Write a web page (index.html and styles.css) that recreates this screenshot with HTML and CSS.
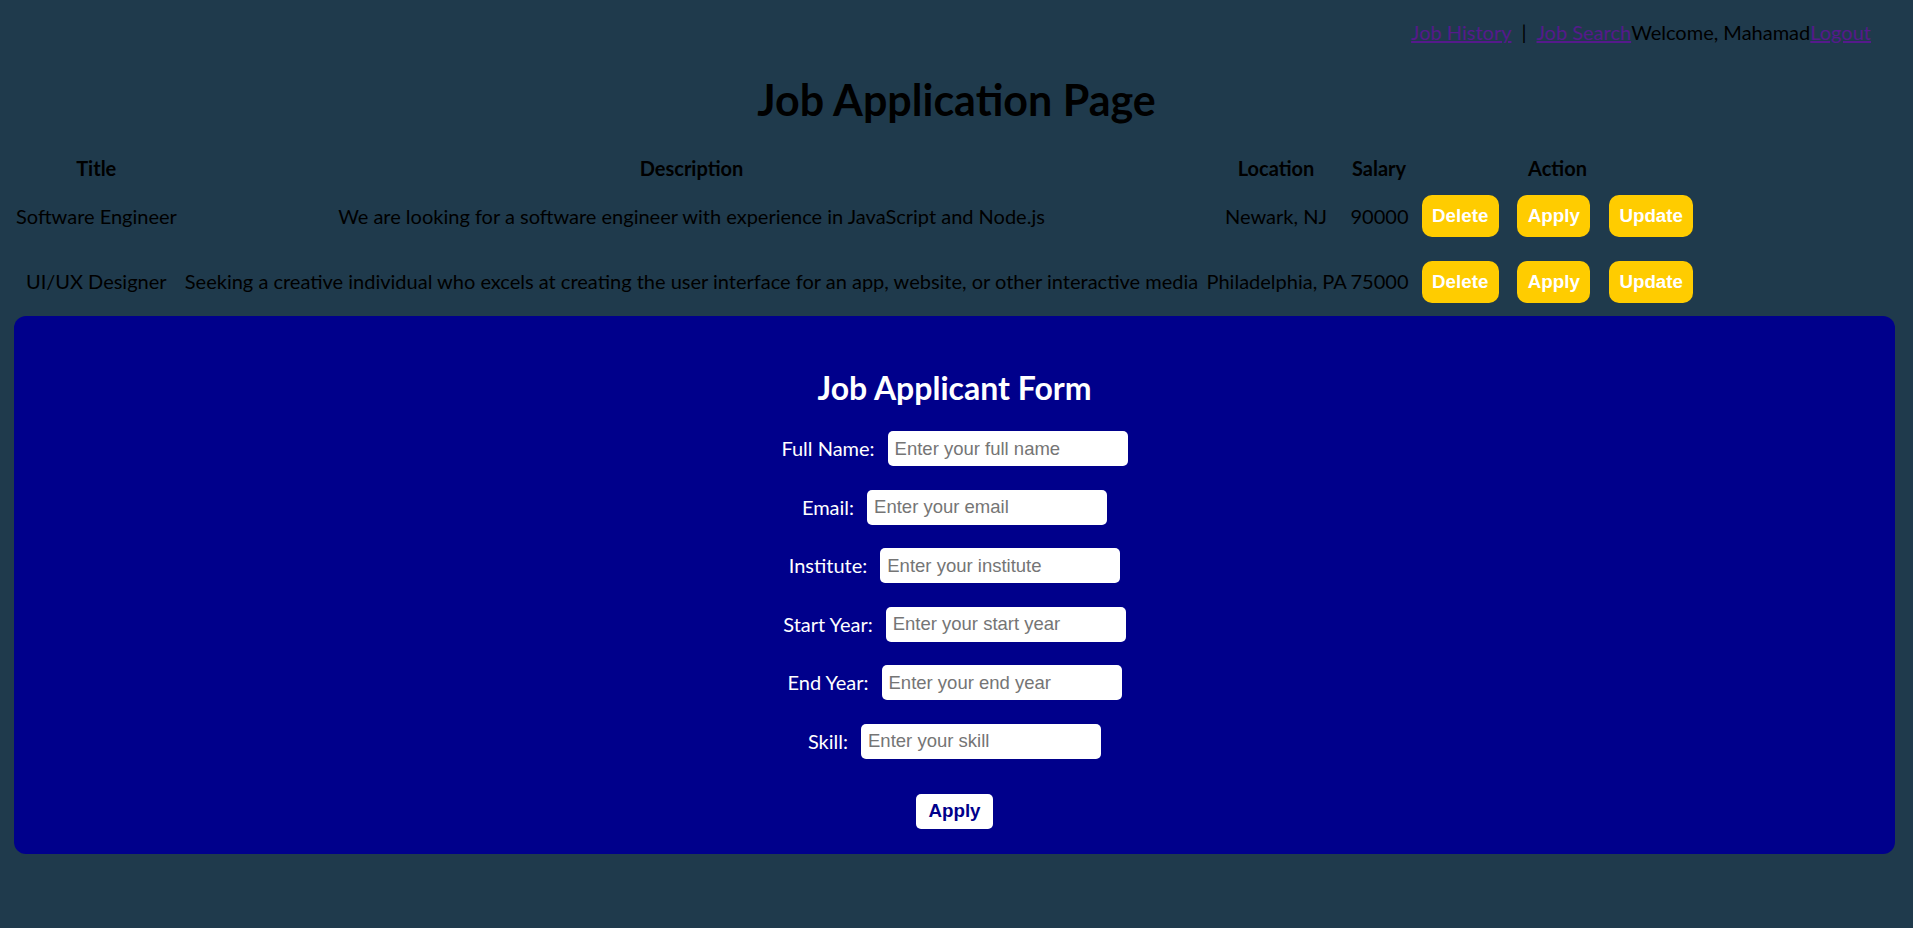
FILE: index.html
```html
<!DOCTYPE html>
<html lang="en">
<head>
<meta charset="utf-8">
<title>Job Application Page</title>
<link rel="stylesheet" href="styles.css">
</head>
<body>
<header class="topbar">
  <nav class="nav">
    <a href="#" class="nav-link">Job History</a><span class="sep">|</span><a href="#" class="nav-link">Job Search</a><span class="welcome">Welcome, Mahamad</span><a href="#" class="nav-link">Logout</a>
  </nav>
</header>

<h1 class="page-title">Job Application Page</h1>

<table class="jobs">
  <colgroup>
    <col class="c-title">
    <col class="c-desc">
    <col class="c-loc">
    <col class="c-sal">
    <col class="c-act">
  </colgroup>
  <thead>
    <tr><th>Title</th><th>Description</th><th>Location</th><th>Salary</th><th>Action</th></tr>
  </thead>
  <tbody>
    <tr>
      <td>Software Engineer</td>
      <td>We are looking for a software engineer with experience in JavaScript and Node.js</td>
      <td>Newark, NJ</td>
      <td>90000</td>
      <td><div class="btn-group"><button class="btn-action">Delete</button><button class="btn-action">Apply</button><button class="btn-action">Update</button></div></td>
    </tr>
    <tr>
      <td>UI/UX Designer</td>
      <td>Seeking a creative individual who excels at creating the user interface for an app, website, or other interactive media</td>
      <td>Philadelphia, PA</td>
      <td>75000</td>
      <td><div class="btn-group"><button class="btn-action">Delete</button><button class="btn-action">Apply</button><button class="btn-action">Update</button></div></td>
    </tr>
  </tbody>
</table>

<section class="form-card">
  <h2 class="form-title">Job Applicant Form</h2>
  <form class="applicant-form">
    <div class="field"><label class="field-label">Full Name:</label><input class="field-input" type="text" placeholder="Enter your full name"></div>
    <div class="field"><label class="field-label">Email:</label><input class="field-input" type="text" placeholder="Enter your email"></div>
    <div class="field"><label class="field-label">Institute:</label><input class="field-input" type="text" placeholder="Enter your institute"></div>
    <div class="field"><label class="field-label">Start Year:</label><input class="field-input" type="text" placeholder="Enter your start year"></div>
    <div class="field"><label class="field-label">End Year:</label><input class="field-input" type="text" placeholder="Enter your end year"></div>
    <div class="field"><label class="field-label">Skill:</label><input class="field-input" type="text" placeholder="Enter your skill"></div>
    <div class="submit-row"><button type="button" class="btn-submit">Apply</button></div>
  </form>
</section>
</body>
</html>
```

FILE: styles.css
```css
html {
  background: #1f3a4c;
}

body {
  margin: 10px;
  background: #1f3a4c;
  color: #000;
  font-family: Lato, "Open Sans", sans-serif;
  font-size: 20px;
  line-height: 27px;
}

.topbar {
  padding: 9px 32px 0 0;
}

.nav {
  display: flex;
  justify-content: flex-end;
}

.nav-link {
  color: #551a8b;
  text-decoration: underline;
}

.sep {
  padding: 0 10px;
}

.page-title {
  margin: 27px 0 27px;
  font-size: 43px;
  line-height: 53px;
  font-weight: 700;
  text-align: center;
}

.jobs {
  margin-left: 3.5px;
  table-layout: fixed;
  width: 1691.5px;
  border-collapse: separate;
  border-spacing: 0;
}

.c-title { width: 165.5px; }
.c-desc { width: 1025px; }
.c-loc { width: 144px; }
.c-sal { width: 62px; }
.c-act { width: 295px; }

.jobs th,
.jobs td {
  padding: 1.75px 2.5px;
  text-align: center;
  vertical-align: middle;
  white-space: nowrap;
}

.jobs th {
  font-weight: 700;
}

.btn-group {
  display: flex;
  justify-content: center;
  gap: 18.5px;
  padding: 10px 0;
}

.btn-action {
  background: #ffcc00;
  color: #fff;
  border: none;
  border-radius: 10px;
  padding: 10px 10.5px;
  font-family: "Liberation Sans", Arial, sans-serif;
  font-weight: 700;
  font-size: 18.75px;
  line-height: 22px;
}

.form-card {
  margin: 1px 8px 0 4px;
  padding: 52px 0 25px;
  background: #00008b;
  border-radius: 12px;
  display: flex;
  flex-direction: column;
  align-items: center;
}

.form-title {
  margin: 0 0 23.5px;
  color: #fff;
  font-size: 32px;
  line-height: 40px;
  font-weight: 700;
}

.applicant-form {
  display: flex;
  flex-direction: column;
  align-items: center;
  gap: 23.6px;
}

.field {
  display: flex;
  align-items: center;
  gap: 13px;
  height: 35px;
}

.field-label {
  color: #fff;
}

.field-input {
  box-sizing: border-box;
  width: 240px;
  height: 35px;
  border: none;
  border-radius: 5px;
  padding: 0 7px;
  background: #fff;
  font-family: "Liberation Sans", Arial, sans-serif;
  font-size: 18.5px;
  color: #000;
}

.field-input::placeholder {
  color: #757575;
}

.submit-row {
  margin-top: 11px;
}

.btn-submit {
  height: 35px;
  padding: 0 12px;
  background: #fff;
  color: #00008b;
  border: none;
  border-radius: 5px;
  font-family: "Liberation Sans", Arial, sans-serif;
  font-weight: 700;
  font-size: 18.75px;
}
```
